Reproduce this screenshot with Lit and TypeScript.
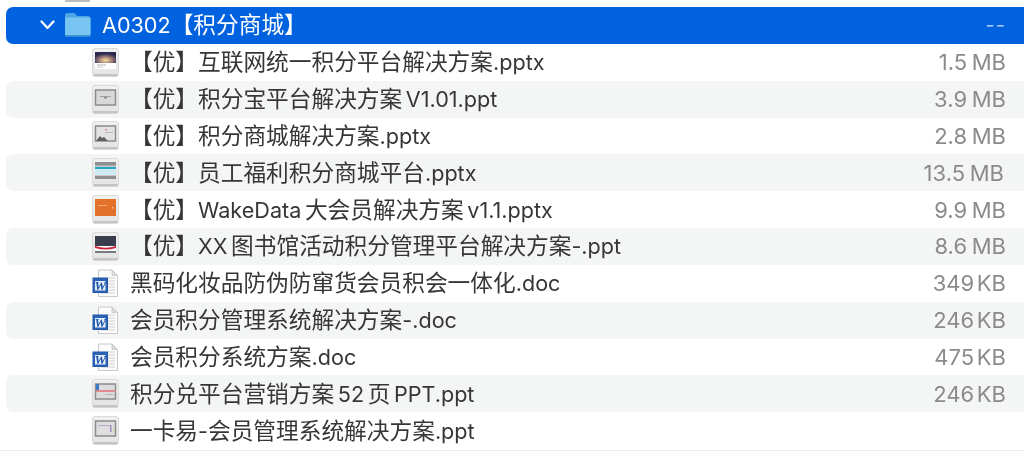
import { LitElement, html, css, svg } from "lit";
import { customElement } from "lit/decorators.js";

type Kind = "sunset" | "gray" | "mountain" | "cyan" | "orange" | "dark" | "word" | "redline" | "purple";
interface Row { name: string; size: string; kind: Kind; nudge?: boolean; }

const rows: Row[] = [
  { name: "【优】互联网统一积分平台解决方案.pptx", size: "1.5 MB", kind: "sunset" },
  { name: "【优】积分宝平台解决方案 V1.01.ppt", size: "3.9 MB", kind: "gray" },
  { name: "【优】积分商城解决方案.pptx", size: "2.8 MB", kind: "mountain" },
  { name: "【优】员工福利积分商城平台.pptx", size: "13.5 MB", kind: "cyan", nudge: true },
  { name: "【优】WakeData 大会员解决方案 v1.1.pptx", size: "9.9 MB", kind: "orange" },
  { name: "【优】XX 图书馆活动积分管理平台解决方案-.ppt", size: "8.6 MB", kind: "dark" },
  { name: "黑码化妆品防伪防窜货会员积会一体化.doc", size: "349 KB", kind: "word" },
  { name: "会员积分管理系统解决方案-.doc", size: "246 KB", kind: "word" },
  { name: "会员积分系统方案.doc", size: "475 KB", kind: "word" },
  { name: "积分兑平台营销方案 52 页 PPT.ppt", size: "246 KB", kind: "redline" },
  { name: "一卡易-会员管理系统解决方案.ppt", size: "", kind: "purple" },
];

const slides: Record<string, unknown> = {
  sunset: svg`<rect x="3" y="4" width="21" height="17" fill="#fff"/>
    <defs><radialGradient id="sun" cx=".5" cy=".75" r=".6"><stop offset="0" stop-color="#f4e2a0"/><stop offset=".45" stop-color="#b08a7c"/><stop offset="1" stop-color="#2d2a52"/></radialGradient></defs>
    <rect x="3" y="4" width="21" height="11" fill="url(#sun)"/>
    <rect x="5" y="16.500" width="9" height="1" fill="#b5b5c0"/><rect x="5" y="18.500" width="6" height="1" fill="#d0d0d6"/>`,
  gray: svg`<rect x="3.500" y="5" width="20" height="15" fill="#d8d8d8" stroke="#8c8c8c" stroke-width="1.500"/>
    <rect x="8" y="11" width="11" height="1" fill="#a0a0a0"/><rect x="12" y="12" width="3" height="1.500" fill="#8a8a8a"/>`,
  mountain: svg`<rect x="3.500" y="5" width="20" height="15" fill="#e2e2e2" stroke="#8c8c8c" stroke-width="1.500"/>
    <path d="M4 20l4-5 2 2 2-1 4 4z" fill="#5f5f5f"/><rect x="13" y="8" width="2" height="1.500" fill="#d08a90"/><rect x="13" y="11" width="8" height="1" fill="#b8b8b8"/>`,
  cyan: svg`<rect x="3" y="4" width="21" height="17" fill="#c8c8c8"/><rect x="3" y="4" width="21" height="3.500" fill="#8f8f8f"/>
    <rect x="3" y="9" width="21" height="2" fill="#1fa6c8"/><rect x="3" y="11" width="21" height="6" fill="#cfeaf2"/><rect x="3" y="18" width="21" height="3" fill="#8f8f8f"/>`,
  orange: svg`<rect x="3" y="4" width="21" height="17" fill="#e2722a"/><rect x="6" y="10" width="9" height="1" fill="#f2a878"/><rect x="20" y="12" width="1.500" height="1.500" fill="#f6c6a6"/>`,
  dark: svg`<rect x="3" y="4" width="21" height="17" fill="#fff"/><rect x="3" y="4" width="21" height="10" fill="#3a3d4c"/>
    <path d="M3 14q10.500 3.500 21 0v2q-10.500 3-21 0z" fill="#c9253a"/><rect x="3" y="19" width="21" height="2" fill="#77777f"/>`,
  redline: svg`<rect x="3.500" y="5" width="20" height="15" fill="#dcdcde" stroke="#8c8c8c" stroke-width="1.500"/>
    <rect x="4" y="5" width="3" height="6" fill="#3d78c4"/><rect x="3.500" y="11" width="20" height="2" fill="#e08a92"/><rect x="13" y="15" width="8" height="1" fill="#b4b4b4"/>`,
  purple: svg`<rect x="3.500" y="5" width="20" height="15" fill="#dedede" stroke="#8c8c8c" stroke-width="1.500"/>
    <rect x="6" y="9" width="13" height="1" fill="#b9aacb"/><rect x="18" y="9" width="1.500" height="7" fill="#9c8cc0"/><rect x="21" y="13" width="1" height="3" fill="#d8d8a8"/>`,
};

function thumb(kind: string) {
  return html`<svg class="icon" width="27" height="29" viewBox="0 0 27 29">
    <defs><linearGradient id="case" x1="0" y1="0" x2="0" y2="1"><stop offset="0" stop-color="#f1f1f1"/><stop offset="1" stop-color="#e4e4e4"/></linearGradient></defs>
    <rect x=".5" y=".5" width="26" height="27.500" rx="2.500" fill="url(#case)" stroke="#dadada"/>
    <rect x="1" y="26" width="25" height="2.500" rx="1.200" fill="#c4c4c4"/>
    ${slides[kind]}
  </svg>`;
}

const word = html`<svg class="icon" width="27" height="29" viewBox="0 0 27 29">
  <path d="M6.500 1H20l5.500 5.500V27.500H6.500z" fill="#fbfbfb" stroke="#c9c9c9"/>
  <path d="M20 1v5.500h5.500z" fill="#dcdcdc" stroke="#bcbcbc" stroke-width=".6"/>
  <g stroke="#cfcfcf" stroke-width="1"><path d="M16 9h7M16 12h7M16 15h7M16 18h7M16 21h7M9 24h14"/></g>
  <rect x="1" y="9" width="14.500" height="14.500" fill="#2a63b6" stroke="#2158a8"/>
  <rect x="3" y="12" width="10.500" height="9.500" fill="#e6eef9"/>
  <text x="8.200" y="20.800" text-anchor="middle" font-family="Liberation Serif, serif" font-weight="700" font-style="italic" font-size="13" fill="#1c54a8">W</text>
</svg>`;

@customElement("app-root")
export class AppRoot extends LitElement {
  static styles = css`
    :host {
      display: block;
      position: relative;
      height: 451px;
      overflow: hidden;
      background: #fff;
      font-family: Inter, "Noto Sans CJK SC", "Noto Sans", sans-serif;
      color: #363636;
    }
    .list { padding-top: 7px; filter: blur(0.45px); }
    .stub {
      position: absolute;
      left: 65px; top: 0;
      width: 25px; height: 1.500px;
      background: #bdbdbd;
    }
    .row {
      height: 36.850px;
      margin-left: 6px;
      padding-right: 18px;
      display: grid;
      grid-template-columns: 1fr auto;
      align-items: center;
      border-radius: 7px 0 0 7px;
    }
    .row.alt { background: #f4f5f5; }
    .cell { display: flex; align-items: center; min-width: 0; white-space: nowrap; }
    .child { padding-left: 86px; }
    .icon { flex: none; margin-right: 11px; filter: blur(0.3px); }
    .name { font-size: 21.600px; word-spacing: -2.500px; }
    .cjk { font-size: 22.700px; font-family: "Noto Sans CJK SC", sans-serif; line-height: 1; }
    .size { color: #8b8b8b; font-size: 22px; word-spacing: -3.500px; }
    .size.mb { word-spacing: -1.500px; }
    .size.nudge { margin-right: 2px; }
    .sel { background: #0162e0; color: #fff; }
    .sel .cell { padding-left: 34px; }
    .chev { flex: none; margin-right: 9px; }
    .folder { flex: none; margin-right: 11px; }
    .dash { color: #a9c9f5; letter-spacing: 1px; font-size: 20px; }
    .end { height: 1px; margin-top: 1px; background: #eeeeee; }
  `;

  private renderName(n: string) {
    const parts = n.match(/[\u3000-\u9fff\uff00-\uffef]+|[^\u3000-\u9fff\uff00-\uffef]+/g) ?? [];
    return parts.map((p) =>
      /[\u3000-\u9fff\uff00-\uffef]/.test(p) ? html`<span class="cjk">${p}</span>` : html`<span>${p}</span>`
    );
  }

  render() {
    return html`
      <div class="stub"></div>
      <div class="list">
        <div class="row sel">
          <div class="cell">
            <svg class="chev" width="15" height="10" viewBox="0 0 15 10">
              <path d="M1.500 1.500L7.500 8l6-6.500" fill="none" stroke="#fff" stroke-width="2.200" stroke-linecap="round" stroke-linejoin="round"/>
            </svg>
            <svg class="folder" width="27" height="26" viewBox="0 0 27 26">
              <path d="M1 3.500Q1 1 3.500 1h6q1.500 0 2.500 1.500L13 4h11q2.500 0 2.500 2.500V22q0 2.500-2.500 2.500H3.500Q1 24.500 1 22z" fill="#4fa6e4"/>
              <path d="M1 7q0-1.500 1.500-1.500h22.500q1.500 0 1.500 1.500v14.500q0 2-2 2H3q-2 0-2-2z" fill="#79c5f2"/>
              <rect x="1" y="23" width="25.500" height="1.500" fill="#3f93cf"/>
            </svg>
            <span class="name">${this.renderName("A0302【积分商城】")}</span>
          </div>
          <span class="dash">--</span>
        </div>
        ${rows.map(
          (r, i) => html`
            <div class="row ${i % 2 === 1 ? "alt" : ""}">
              <div class="cell child">
                ${r.kind === "word" ? word : thumb(r.kind)}
                <span class="name">${this.renderName(r.name)}</span>
              </div>
              <span class="size ${r.size.endsWith("MB") ? "mb" : ""} ${r.nudge ? "nudge" : ""}">${r.size}</span>
            </div>
          `
        )}
        <div class="end"></div>
      </div>
    `;
  }
}
